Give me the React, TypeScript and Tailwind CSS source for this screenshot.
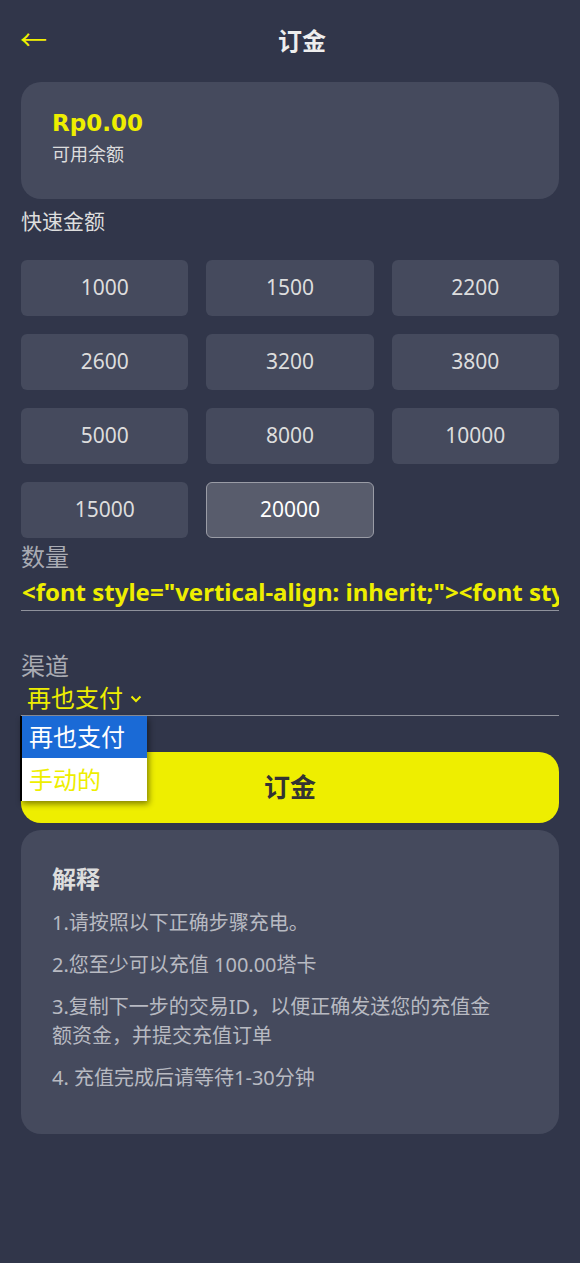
import React from 'react'

const amounts = ['1000', '1500', '2200', '2600', '3200', '3800', '5000', '8000', '10000', '15000', '20000']

const font = { fontFamily: '"Noto Sans", "Noto Sans CJK SC", sans-serif' }

export default function App() {
  return (
    <div style={font} className="min-h-[1263px] w-full bg-[#31364a] px-[21px] text-[#dcdde2]">
      {/* header */}
      <div className="flex h-[82px] items-center">
        <span className="-ml-[1px] -mt-[3px] w-[25px] text-[27px] leading-[30px] text-[#f0f000]">←</span>
        <h1 className="flex-1 text-center text-[24px] font-bold leading-[30px] text-[#eeeeee]">订金</h1>
      </div>

      {/* balance */}
      <div className="h-[117px] rounded-[20px] bg-[#454a5d] pl-[31px] pt-[27px]">
        <div className="font-['DejaVu_Sans',sans-serif] text-[23px] font-bold leading-[28px] text-[#eeee00]">Rp0.00</div>
        <div className="mt-[5px] text-[18px] leading-[24px] text-[#dddddd]">可用余额</div>
      </div>

      <div className="mt-[8px] text-[21px] leading-[28px] text-[#dddddd]">快速金额</div>

      <div className="mt-[25px] grid grid-cols-3 gap-[18px]">
        {amounts.map((a) => (
          <button
            key={a}
            className={
              a === '20000'
                ? 'h-[56px] rounded-[6px] border border-[#9a9ca6] bg-[#585c6c] text-[21px] text-white'
                : 'h-[56px] rounded-[6px] bg-[#454a5d] text-[21px] text-[#dddddd]'
            }
          >
            {a}
          </button>
        ))}
      </div>

      {/* quantity */}
      <div className="mt-[4px] text-[24px] leading-[30px] text-[#a9abb3]">数量</div>
      <input
        readOnly
        value={'<font style="vertical-align: inherit;"><font style="vertical-align: inherit;">'}
        className="block h-[39px] w-full border-b border-[#8f929c] bg-transparent pl-[1px] text-[24px] font-bold text-[#eeee00] outline-none"
      />

      {/* channel */}
      <div className="mt-[40px] text-[24px] leading-[30px] text-[#a9abb3]">渠道</div>
      <div className="relative">
        <div className="flex h-[35px] items-center gap-[7px] border-b border-[#8f929c] pl-[6px]">
          <span className="text-[24px] leading-[30px] text-[#eeee00]">再也支付</span>
          <svg width="12" height="9" viewBox="0 0 12 9" fill="none" stroke="#eeee00" strokeWidth="2">
            <path d="M1.5 2.5l4.5 4.5 4.5-4.5" />
          </svg>
        </div>
        <ul className="absolute left-[-1px] top-full z-10 w-[127px] border-l-2 border-black bg-white shadow-[2px_3px_6px_rgba(0,0,0,0.45)]">
          <li className="h-[42px] bg-[#1a6ad6] pl-[7px] text-[24px] leading-[42px] text-white">再也支付</li>
          <li className="h-[43px] pl-[7px] text-[24px] leading-[43px] text-[#eeee00]">手动的</li>
        </ul>
      </div>

      <button className="mt-[36px] h-[71px] w-full rounded-[20px] bg-[#eeee00] text-[26px] font-bold text-[#333333]">
        订金
      </button>

      {/* explanation */}
      <div className="mt-[7px] rounded-[20px] bg-[#454a5d] pb-[42px] pl-[31px] pt-[34px]">
        <h2 className="mb-[14px] text-[24px] font-bold leading-[30px] text-[#dddddd]">解释</h2>
        <div className="flex w-[447px] flex-col gap-[13px] text-[20px] leading-[29px] text-[#b8bac2]">
          <p>1.请按照以下正确步骤充电。</p>
          <p>2.您至少可以充值 100.00塔卡</p>
          <p>3.复制下一步的交易ID，以便正确发送您的充值金额资金，并提交充值订单</p>
          <p>4. 充值完成后请等待1-30分钟</p>
        </div>
      </div>
    </div>
  )
}
